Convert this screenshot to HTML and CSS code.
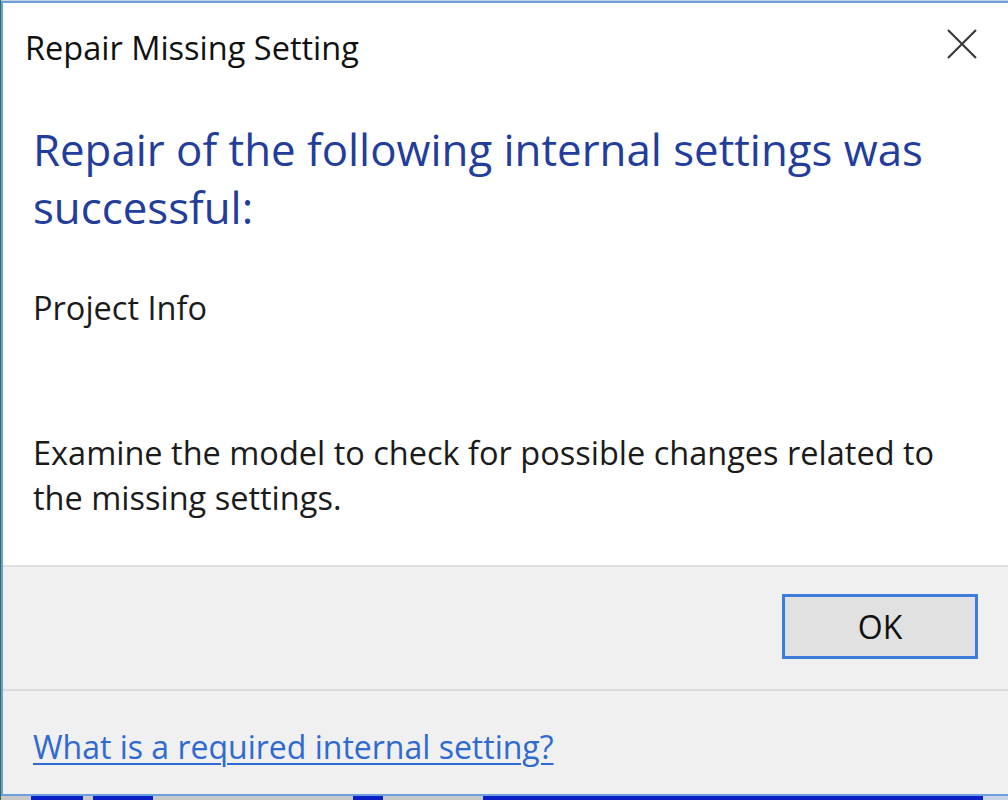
FILE: index.html
```html
<!DOCTYPE html>
<html lang="en">
<head>
<meta charset="utf-8">
<title>Repair Missing Setting</title>
<link rel="stylesheet" href="styles.css">
</head>
<body>
<div class="desktop">
  <div class="window">
    <div class="titlebar">
      <span class="title">Repair Missing Setting</span>
      <span class="close" aria-label="Close">
        <svg width="30" height="30" viewBox="0 0 30 30"><path d="M1 1 L29 29 M29 1 L1 29" stroke="#3a3a3a" stroke-width="2.2" fill="none"/></svg>
      </span>
    </div>
    <div class="content">
      <h1 class="instruction">Repair of the following internal settings was successful:</h1>
      <p class="item">Project Info</p>
      <p class="note">Examine the model to check for possible changes related to the missing settings.</p>
    </div>
    <div class="buttons">
      <button class="ok">OK</button>
    </div>
    <div class="footer">
      <a class="help" href="#">What is a required internal setting?</a>
    </div>
  </div>
  <div class="taskstrip">
    <span class="blk gray w30"></span><span class="blk blue w52"></span><span class="blk gray w10"></span><span class="blk blue w60"></span><span class="blk gray w200"></span><span class="blk blue w30"></span><span class="blk gray w100"></span><span class="blk blue w500"></span>
  </div>
</div>
</body>
</html>
```

FILE: styles.css
```css
html, body {
  margin: 0;
  padding: 0;
  overflow: hidden;
  background: #1a2a8c;
}
.desktop {
  width: 1008px;
  height: 800px;
  padding: 1px 0 0 1px;
  box-sizing: border-box;
  display: flex;
  flex-direction: column;
  background: linear-gradient(to right, #2f6f4a 0, #2f6f4a 1px, #c9d3e6 1px);
}
.window {
  width: 1020px;
  height: 795px;
  flex-shrink: 0;
  box-sizing: border-box;
  border: 2px solid #6c9fdd;
  border-right: none;
  background: #ffffff;
  display: flex;
  flex-direction: column;
  font-family: "Open Sans", "Noto Sans", sans-serif;
  color: #1b1b1b;
}
.titlebar {
  height: 88px;
  flex-shrink: 0;
  display: flex;
  align-items: center;
  padding-left: 22px;
  padding-right: 31px;
  width: 1005px;
  box-sizing: border-box;
}
.title {
  flex: 1;
  font-size: 32.5px;
  color: #111;
}
.close {
  display: flex;
  width: 30px;
  height: 30px;
  align-self: flex-start;
  margin-top: 26px;
}
.content {
  flex: 1;
  padding: 29px 0 0 30px;
}
.instruction {
  margin: 0;
  width: 960px;
  font-weight: normal;
  font-size: 43.8px;
  line-height: 58px;
  color: #233d9c;
}
.item {
  margin: 49px 0 0 0;
  font-size: 32.5px;
  line-height: 45px;
}
.note {
  margin: 100px 0 0 0;
  width: 930px;
  font-size: 32.5px;
  line-height: 45px;
}
.buttons {
  height: 124px;
  flex-shrink: 0;
  border-top: 2px solid #dfdfdf;
  background: #f0f0f0;
  display: flex;
  align-items: flex-start;
  padding-top: 27px;
  padding-left: 779px;
  box-sizing: border-box;
}
.ok {
  width: 196px;
  height: 65px;
  border: 3px solid #3d7cd8;
  background: #e1e1e1;
  font-family: "Open Sans", "Noto Sans", sans-serif;
  font-size: 32px;
  color: #111;
  padding: 0;
}
.footer {
  height: 105px;
  flex-shrink: 0;
  border-top: 2px solid #dcdcdc;
  background: #f0f0f0;
  padding: 34px 0 0 30px;
  box-sizing: border-box;
}
.help {
  font-size: 32px;
  color: #2f6ad0;
  text-decoration: underline;
  text-decoration-thickness: 2px;
  text-underline-offset: 4px;
}
.taskstrip {
  display: flex;
  height: 4px;
}
.blk { display: block; height: 4px; }
.gray { background: #c8c8c8; }
.blue { background: #0a1fc8; }
.w10 { width: 10px; }
.w30 { width: 30px; }
.w52 { width: 52px; }
.w60 { width: 60px; }
.w100 { width: 100px; }
.w200 { width: 200px; }
.w500 { width: 500px; }
```
